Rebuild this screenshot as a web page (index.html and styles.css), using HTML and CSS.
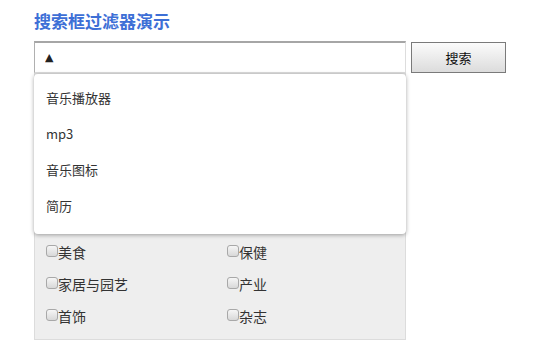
FILE: index.html
```html
<!DOCTYPE html>
<html lang="zh-CN">
<head>
<meta charset="utf-8">
<title>搜索框过滤器演示</title>
<link rel="stylesheet" href="styles.css">
</head>
<body>
<div class="page">
  <h1 class="title">搜索框过滤器演示</h1>
  <div class="search">
    <div class="field">
      <input class="input" type="text" value="▲">
      <ul class="dropdown">
        <li class="item">音乐播放器</li>
        <li class="item">mp3</li>
        <li class="item">音乐图标</li>
        <li class="item">简历</li>
      </ul>
    </div>
    <button class="btn" type="button">搜索</button>
  </div>
  <div class="panel">
    <label class="opt"><input class="cb" type="checkbox">美食</label>
    <label class="opt"><input class="cb" type="checkbox">保健</label>
    <label class="opt"><input class="cb" type="checkbox">家居与园艺</label>
    <label class="opt"><input class="cb" type="checkbox">产业</label>
    <label class="opt"><input class="cb" type="checkbox">首饰</label>
    <label class="opt"><input class="cb" type="checkbox">杂志</label>
  </div>
</div>
</body>
</html>
```

FILE: styles.css
```css
html, body {
  margin: 0;
  padding: 0;
  background: #ffffff;
}

.page {
  padding: 9px 0 0 34px;
  font-family: "Noto Sans CJK SC", "Noto Sans", sans-serif;
  color: #333333;
}

.title {
  margin: 0 0 8px 0;
  font-size: 17px;
  line-height: 24px;
  font-weight: bold;
  color: #3d6fd6;
}

.search {
  display: flex;
  align-items: center;
  gap: 5px;
}

.field {
  position: relative;
  width: 372px;
}

.input {
  display: block;
  box-sizing: border-box;
  width: 372px;
  height: 32px;
  margin: 0;
  padding: 0 0 0 10px;
  border: 1px solid #dddddd;
  border-top: 2px solid #a6a6a6;
  border-left: 1px solid #b0b0b0;
  font-family: "DejaVu Sans", sans-serif;
  font-size: 11px;
  color: #222222;
  outline: none;
  background: #ffffff;
}

.dropdown {
  position: absolute;
  top: 33px;
  left: 0;
  z-index: 2;
  box-sizing: border-box;
  width: 372px;
  height: 160px;
  margin: 0;
  padding: 6px 0 0 0;
  list-style: none;
  background: #ffffff;
  border-radius: 4px;
  box-shadow: 0 1px 4px rgba(0, 0, 0, 0.35);
}

.item {
  height: 36px;
  line-height: 36px;
  padding-left: 12px;
  font-size: 13px;
  color: #333333;
}

.btn {
  box-sizing: border-box;
  width: 95px;
  height: 31px;
  margin: 0;
  padding: 0;
  border: 1px solid #7a7a7a;
  background: linear-gradient(#fbfbfb, #dcdcdc);
  font-family: "Noto Sans CJK SC", sans-serif;
  font-size: 13px;
  color: #111111;
}

.panel {
  box-sizing: border-box;
  width: 372px;
  margin-top: 0;
  padding: 162px 0 7px 10px;
  border: 1px solid #dcdcdc;
  background: #eeeeee;
  display: grid;
  grid-template-columns: 181px 181px;
  grid-auto-rows: 32px;
}

.opt {
  display: flex;
  align-items: center;
  font-size: 14px;
  color: #333333;
}

.cb {
  appearance: none;
  -webkit-appearance: none;
  box-sizing: border-box;
  width: 12px;
  height: 12px;
  margin: -3px 0 0 1px;
  border: 1px solid #a8a8a8;
  border-radius: 3px;
  background: linear-gradient(#f6f6f6, #d8d8d8);
}
```
